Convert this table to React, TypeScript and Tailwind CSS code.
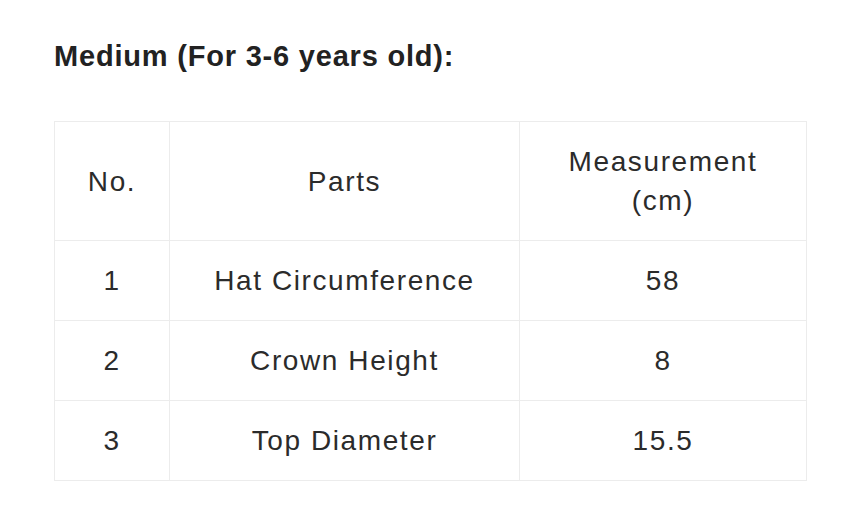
const rows = [
  { no: '1', part: 'Hat Circumference', value: '58' },
  { no: '2', part: 'Crown Height', value: '8' },
  { no: '3', part: 'Top Diameter', value: '15.5' },
];

export default function App() {
  return (
    <div className="min-h-screen bg-white px-[54px] pt-[36px] font-['Liberation_Sans',Arial,sans-serif] text-[#2b2b2b]">
      <h2 className="text-[29px] font-bold leading-[40px] tracking-[0.8px] text-[#222]">Medium (For 3-6 years old):</h2>

      <table className="mt-[45px] w-[752px] table-fixed border-collapse text-center text-[28px] leading-[39px] tracking-[1.6px]">
        <colgroup>
          <col className="w-[115px]" />
          <col className="w-[350px]" />
          <col className="w-[287px]" />
        </colgroup>
        <thead>
          <tr>
            <th className="border border-[#ececec] py-[20px] font-normal">No.</th>
            <th className="border border-[#ececec] py-[20px] font-normal">Parts</th>
            <th className="border border-[#ececec] px-[40px] py-[20px] font-normal">Measurement (cm)</th>
          </tr>
        </thead>
        <tbody>
          {rows.map(r => (
            <tr key={r.no}>
              <td className="border border-[#ececec] py-[20px]">{r.no}</td>
              <td className="border border-[#ececec] py-[20px]">{r.part}</td>
              <td className="border border-[#ececec] py-[20px]">{r.value}</td>
            </tr>
          ))}
        </tbody>
      </table>
    </div>
  );
}
